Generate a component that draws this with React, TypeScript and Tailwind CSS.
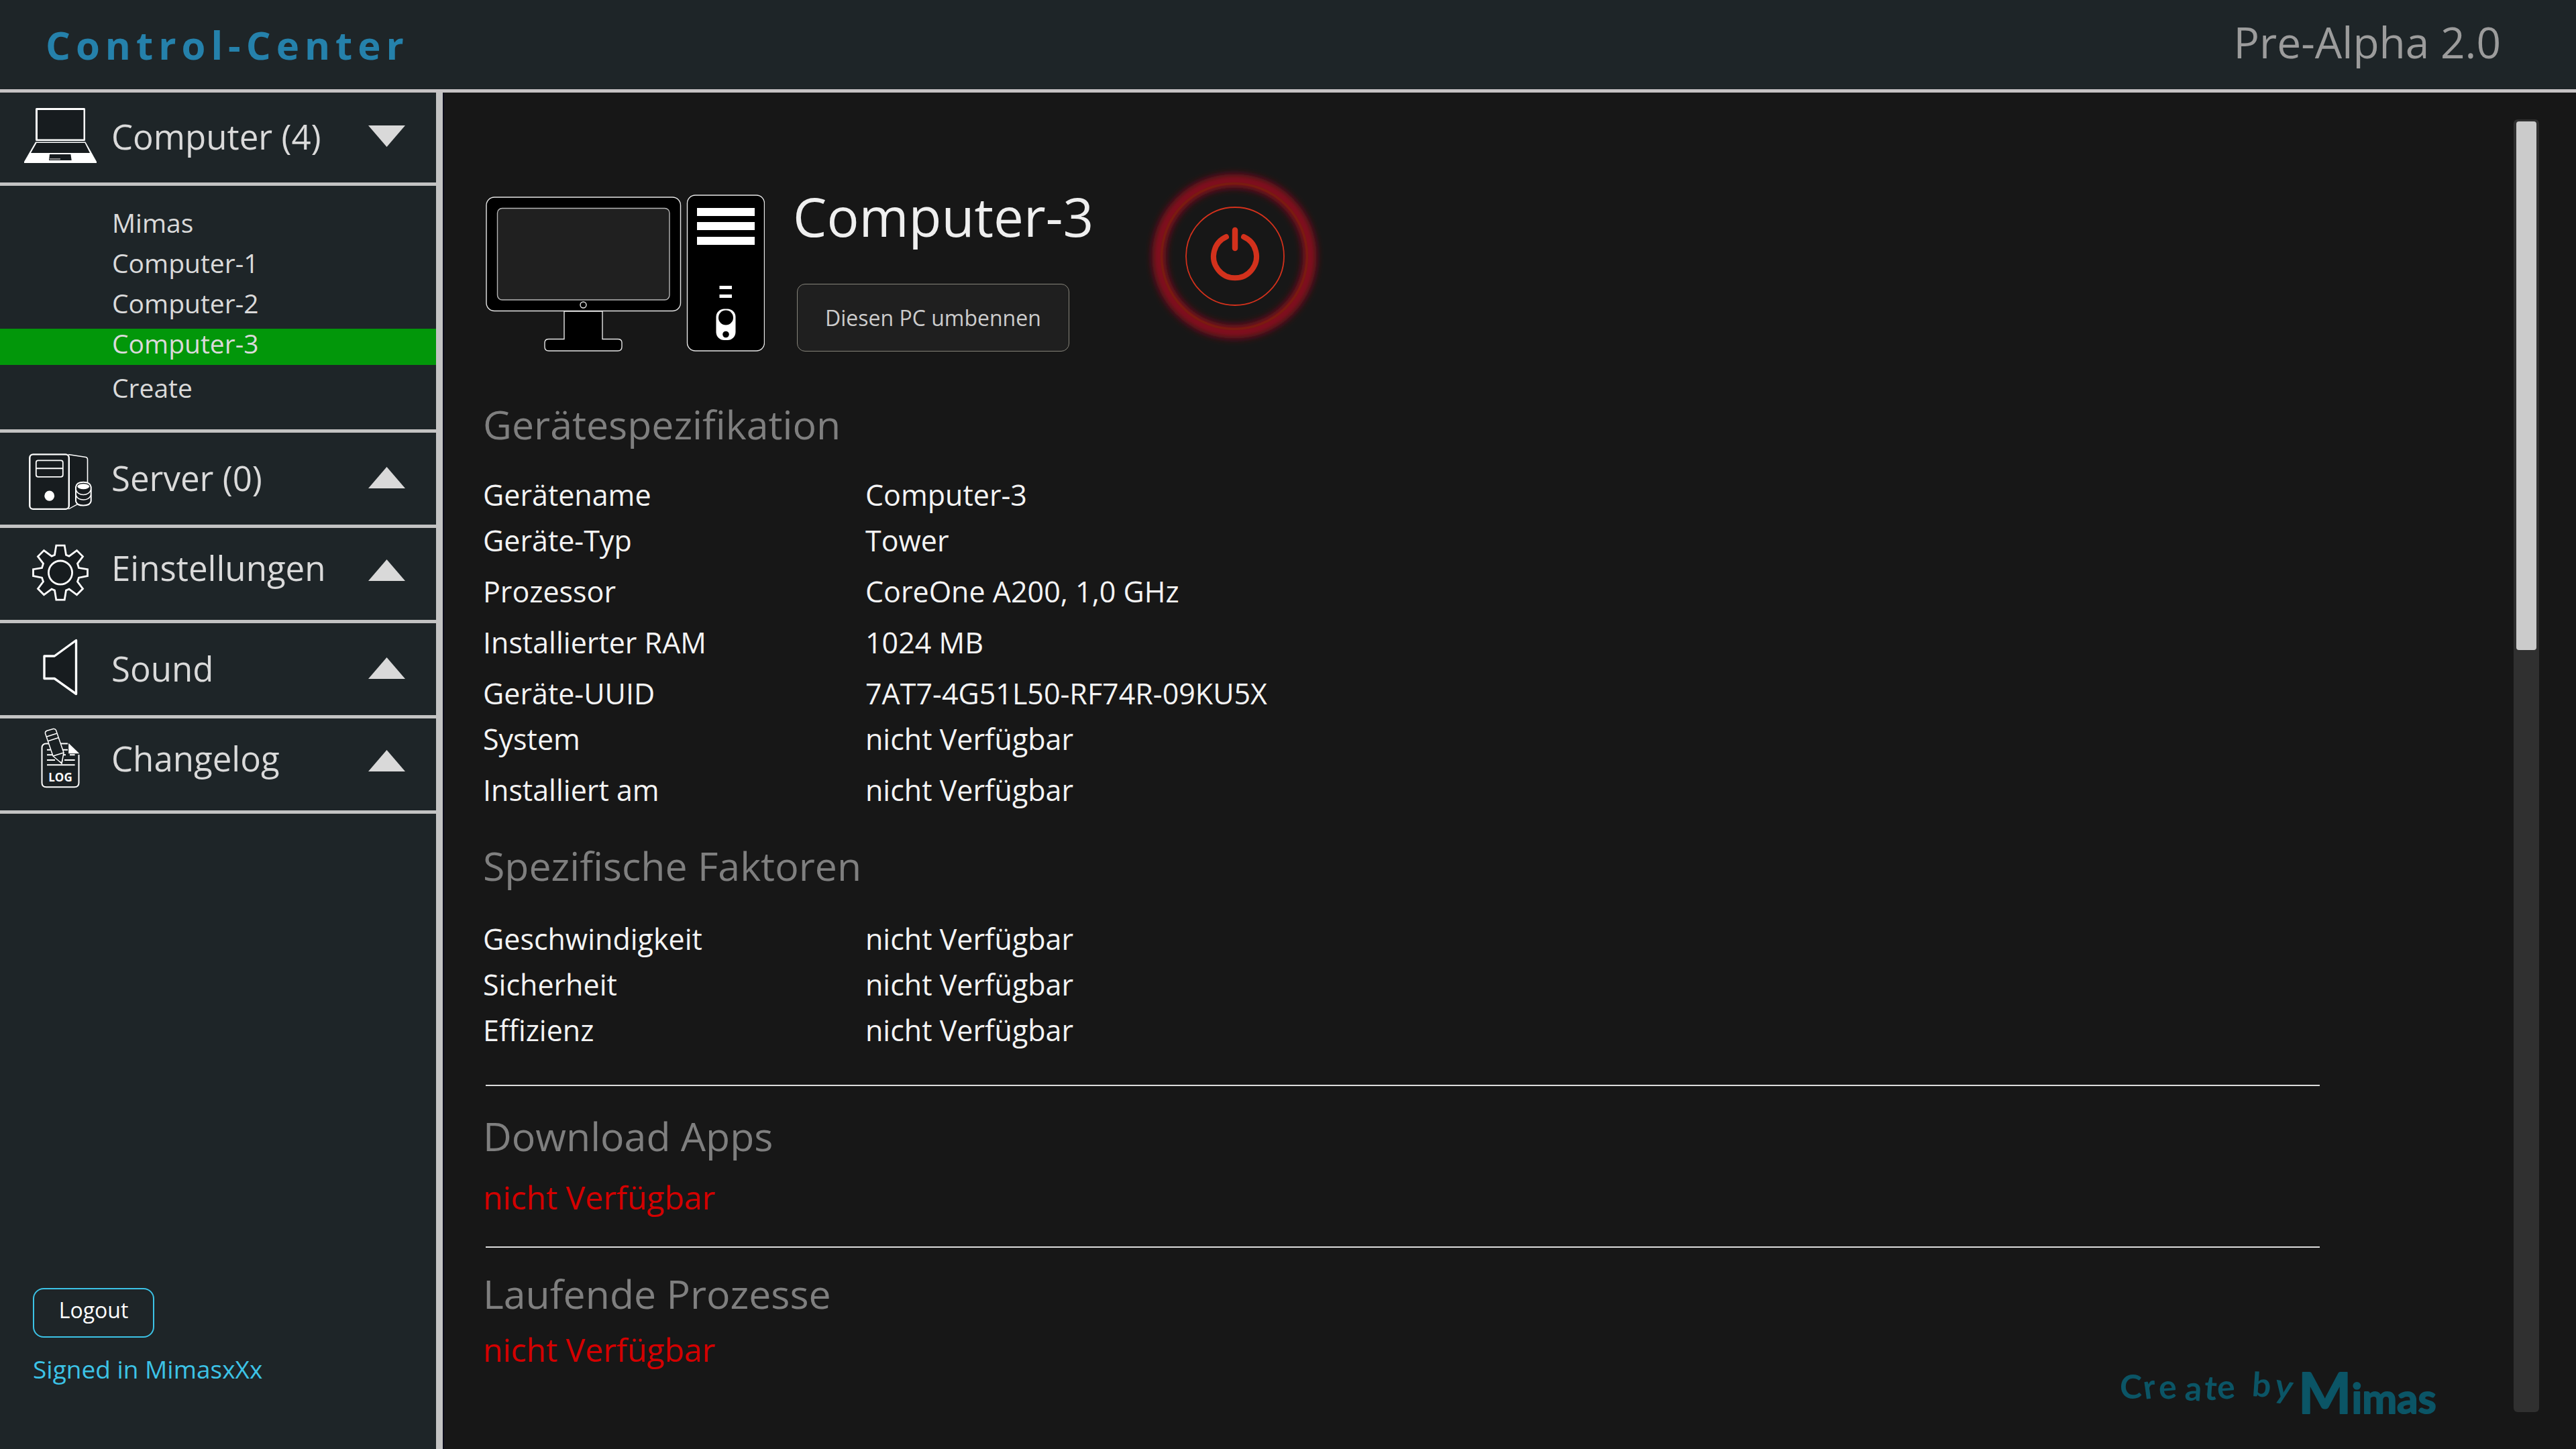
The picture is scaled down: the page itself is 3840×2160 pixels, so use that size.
import type { ReactNode } from "react";

const iconClass = "h-[134px] w-[114px] shrink-0";

function LaptopIcon() {
  return (
    <svg viewBox="0 0 114 134" className={iconClass} aria-hidden="true">
      <rect x="21" y="23" width="74" height="49" rx="1.5" fill="#fff" />
      <rect x="24" y="26" width="68.5" height="43.5" fill="#171c1f" />
      <path d="M21 73.5H95.5L112 103V105H4V103Z" fill="#fff" />
      <path d="M22.5 75H94.5L102 90H14Z" fill="#171c1f" />
      <path d="M42 92H73.4L74.7 101H41Z" fill="#171c1f" />
      <path d="M42 99H58" stroke="#8b8b8b" strokeWidth="2" />
    </svg>
  );
}

function ServerIcon() {
  return (
    <svg viewBox="0 0 114 134" className={iconClass} fill="#171c1f" stroke="#fff" strokeWidth="2" strokeLinejoin="round" aria-hidden="true">
      <path d="M70 30.5L96 34.5Q98.5 35 98.5 38V72L83 104.5L70 112Z" stroke="none" />
      <path d="M70 30.5L96 34.5Q98.5 35 98.5 38V72" fill="none" strokeWidth="1.6" />
      <path d="M70 112L83 104.8" strokeWidth="1.4" />
      <rect x="12.3" y="30.4" width="58.5" height="81.5" rx="5" strokeWidth="2.4" />
      <rect x="21.8" y="39.4" width="40" height="24.4" rx="3" strokeWidth="1.8" />
      <path d="M22 51.3H62" />
      <ellipse cx="41.7" cy="92.2" rx="7.4" ry="7.6" fill="#fff" stroke="none" />
      <path d="M81 79V100Q82 106.5 92.3 106.5Q102.5 106.5 103.7 100V79Q102.5 71.8 92.3 71.8Q82 71.8 81 79Z" />
      <path d="M81 83Q84 90.5 92.3 90.5Q100.5 90.5 103.7 83M81 91Q84 98 92.3 98Q100.5 98 103.7 91" fill="none" strokeWidth="1.6" />
      <ellipse cx="92.3" cy="78.2" rx="8.8" ry="4" fill="#fff" stroke="none" />
    </svg>
  );
}

function GearIcon() {
  return (
    <svg viewBox="0 0 114 134" className={iconClass} fill="#171c1f" stroke="#fff" strokeWidth="2.8" aria-hidden="true">
      <g transform="translate(58 64.6)">
        <path d="M-6.2 -40.5H6.2L8.5 -26.4L13 -24.5L24.5 -33L33.5 -24L25.5 -13.5L27.5 -7L40.5 -5V5L27.5 7.5L25.5 13.5L33.5 24L24.5 33L13 24.5L8.5 26.4L6.2 40.5H-6.2L-8.5 26.4L-13 24.5L-24.5 33L-33.5 24L-25.5 13.5L-27.5 7.5L-40.5 5V-5L-27.5 -7L-25.5 -13.5L-33.5 -24L-24.5 -33L-13 -24.5L-8.5 -26.4Z" />
        <circle r="17.6" />
      </g>
    </svg>
  );
}

function SpeakerIcon() {
  return (
    <svg viewBox="0 0 114 134" className={iconClass} aria-hidden="true">
      <path d="M34 47H49.2L81.5 23.5V103.5L49.2 80.5H34Z" fill="#171c1f" stroke="#fff" strokeWidth="3.4" strokeLinejoin="round" />
    </svg>
  );
}

function LogIcon() {
  return (
    <svg viewBox="0 0 114 134" className={iconClass} fill="none" stroke="#fff" strokeWidth="2" aria-hidden="true">
      <path d="M69 35.5H37Q30.5 35.5 30.5 42V94Q30.5 100.3 37 100.3H79Q85.5 100.3 85.5 94V52" fill="#1a2023" />
      <path d="M70.2 34.7L86.3 50.3H70.2Z" fill="#fff" stroke="none" />
      <path d="M38 44.7H43M58 44.7H69M38 52.3H46M62 52.3H66M72 52.3H79.6M38 60H50M64 60H79.6M38 67.3H79.6" />
      <path d="M35.4 20Q35.2 17.5 38 16.3L47.5 13.5Q50.5 13 51.5 15.5L63 49L60 65L47 54Z" fill="#1a2023" strokeWidth="1.5" strokeLinejoin="round" />
      <path d="M37.2 25.2L52.8 20.2M39.4 31.7L55 26.7M47 54L63 49M57.5 62.5L60 65L61 60" strokeWidth="1.5" />
      <text x="58" y="91.8" textAnchor="middle" fill="#fff" stroke="none" fontSize="17" fontWeight="700">
        LOG
      </text>
    </svg>
  );
}

function Triangle({ down = false }: { down?: boolean }) {
  return (
    <svg viewBox="0 0 55 32" className="h-8 w-[55px] shrink-0" fill="#d9d9d9" aria-hidden="true">
      {down ? <path d="M0 0H55L27.5 32Z" /> : <path d="M0 32H55L27.5 0Z" />}
    </svg>
  );
}

function MenuRow({ icon, label, open = false, raised = false }: { icon: ReactNode; label: string; open?: boolean; raised?: boolean }) {
  return (
    <button
      type="button"
      aria-expanded={open}
      className={`flex w-full cursor-pointer items-center border-b-[5px] border-[#c3c3c3] pr-[46px] pl-8 text-left ${open ? "h-[139px]" : "h-[142px]"}`}
    >
      {icon}
      <span className={`ml-5 flex-1 text-[51px] leading-[72px] ${raised ? "pb-5" : "pb-1"}`}>{label}</span>
      <span className={raised ? "pb-3" : "pb-1"}>
        <Triangle down={open} />
      </span>
    </button>
  );
}

const computers = ["Mimas", "Computer-1", "Computer-2", "Computer-3"];
const itemClass = "block h-[54px] w-full cursor-pointer pb-[10px] pl-[167px] text-left text-[39px] leading-[44px]";

function Sidebar() {
  return (
    <aside className="flex w-[660px] shrink-0 flex-col border-r-[10px] border-[#c3c3c3] bg-[#1e2528] text-[#dadada]">
      <nav>
        <MenuRow icon={<LaptopIcon />} label="Computer (4)" open />
        <div className="border-b-[5px] border-[#c3c3c3] pt-[33px] pb-[30px]">
          <ul className="flex flex-col gap-[6px]">
            {computers.map((name) => (
              <li key={name}>
                <button type="button" className={`${itemClass} ${name === "Computer-3" ? "bg-[#02970a]" : ""}`}>
                  {name}
                </button>
              </li>
            ))}
          </ul>
          <button type="button" className={`${itemClass} mt-3`}>
            Create
          </button>
        </div>
        <MenuRow icon={<ServerIcon />} label="Server (0)" />
        <MenuRow icon={<GearIcon />} label="Einstellungen" raised />
        <MenuRow icon={<SpeakerIcon />} label="Sound" />
        <MenuRow icon={<LogIcon />} label="Changelog" raised />
      </nav>
      <div className="mt-auto pb-[94px] pl-[49px]">
        <button type="button" className="h-[74px] w-[181px] cursor-pointer rounded-2xl border-2 border-[#3cc3e6] pb-2 text-[32px] leading-[44px] text-white">
          Logout
        </button>
        <p className="mt-[22px] text-[37px] leading-[50px] text-[#3cc3e6]">Signed in MimasxXx</p>
      </div>
    </aside>
  );
}

function WorkstationDrawing() {
  return (
    <svg viewBox="0 0 416 234" className="ml-1 h-[234px] w-[416px] shrink-0" fill="#000" stroke="#e6e6e6" strokeWidth="1.4" aria-hidden="true">
      <path d="M117 174V215.500H94Q88 215.500 88 221V227Q88 233 94 233H197Q203 233 203 227V221Q203 215.500 197 215.500H174V174Z" />
      <rect x="1" y="4" width="289.5" height="169.5" rx="12" />
      <rect x="17.5" y="20.5" width="256.5" height="136.5" rx="7" fill="#202020" stroke="#b5b5b5" />
      <circle cx="145.5" cy="164.5" r="4.5" />
      <rect x="300.5" y="1" width="115" height="232" rx="12" />
      <g fill="#fff" stroke="none">
        <rect x="315" y="20" width="86" height="12" />
        <rect x="315" y="41" width="86" height="12" />
        <rect x="315" y="63" width="86" height="12" />
        <rect x="348.5" y="136" width="18.5" height="5" />
        <rect x="348.5" y="149" width="18.5" height="5" />
        <rect x="343.5" y="170.5" width="29" height="46.500" rx="12" />
      </g>
      <circle cx="358" cy="183.5" r="11" stroke="none" />
      <circle cx="358" cy="208.5" r="4.8" stroke="none" />
    </svg>
  );
}

function PowerDrawing() {
  return (
    <svg viewBox="0 0 280 280" className="size-[280px]" fill="none" aria-hidden="true">
      <defs>
        <filter id="glow" x="-20%" y="-20%" width="140%" height="140%">
          <feGaussianBlur stdDeviation="5.5" />
        </filter>
      </defs>
      <circle cx="140" cy="138" r="112.5" stroke="#84111a" strokeWidth="20" filter="url(#glow)" />
      <circle cx="140" cy="138" r="108.5" stroke="#7a1b10" strokeWidth="3.5" />
      <circle cx="141" cy="138" r="73" stroke="#d2311c" strokeWidth="1.8" />
      <path d="M128 109A32 32 0 1 0 154 109" stroke="#d2311c" strokeWidth="8" strokeLinecap="round" />
      <path d="M141 99V126" stroke="#d2311c" strokeWidth="8.5" strokeLinecap="round" />
    </svg>
  );
}

type Spec = { label: string; value: string; tight?: boolean };

const deviceSpecs: Spec[] = [
  { label: "Gerätename", value: "Computer-3" },
  { label: "Geräte-Typ", value: "Tower", tight: true },
  { label: "Prozessor", value: "CoreOne A200, 1,0 GHz" },
  { label: "Installierter RAM", value: "1024 MB" },
  { label: "Geräte-UUID", value: "7AT7-4G51L50-RF74R-09KU5X" },
  { label: "System", value: "nicht Verfügbar", tight: true },
  { label: "Installiert am", value: "nicht Verfügbar" },
];

const factors: Spec[] = [
  { label: "Geschwindigkeit", value: "nicht Verfügbar" },
  { label: "Sicherheit", value: "nicht Verfügbar", tight: true },
  { label: "Effizienz", value: "nicht Verfügbar", tight: true },
];

const sectionTitle = "text-[59px] leading-[80px] text-[#7f7f7f]";
const missing = "text-[48px] leading-[64px] text-[#d40000]";

function SpecTable({ rows, name }: { rows: Spec[]; name: string }) {
  return (
    <table aria-label={name} className="text-left text-[43px] leading-[56px] text-[#f4f4f4]">
      <tbody>
        {rows.map(({ label, value, tight }) => (
          <tr key={label} className={tight ? "h-[68px]" : "h-[76px]"}>
            <th scope="row" className="w-[570px] p-0 align-bottom font-normal">
              {label}
            </th>
            <td className="p-0 align-bottom">{value}</td>
          </tr>
        ))}
      </tbody>
    </table>
  );
}

function Signature() {
  return (
    <svg
      viewBox="0 0 480 120"
      className="absolute right-[205px] bottom-[15px] h-[120px] w-[480px]"
      fill="#0b5566"
      stroke="#0b5566"
      strokeLinejoin="round"
      fontFamily="Lato, sans-serif"
      role="img"
      aria-label="Create by Mimas"
    >
      <text x="5 42 64 101 130 151 189 201 234" y="60 61 61 62 61 61 56 56 57" rotate="0 -8 -4 4 4 -4 0 4 10" fontSize="50" fontWeight="700" strokeWidth="0">
        Create by
      </text>
      <text x="271" y="82" fontWeight="700" strokeWidth="2">
        <tspan fontSize="84">M</tspan>
        <tspan fontSize="62">imas</tspan>
      </text>
    </svg>
  );
}

export default function App() {
  return (
    <div className="flex min-h-screen flex-col bg-[#171717] font-['Open_Sans',sans-serif]">
      <header className="flex h-[138px] items-center justify-between border-b-[5px] border-[#c6c3c4] bg-[#1e2528] pr-[112px] pl-[68px]">
        <h1 className="text-[58px] leading-[80px] font-bold tracking-[8px] text-[#2581ab]">Control-Center</h1>
        <p className="pb-2 text-[64px] leading-[88px] text-[#9c9c9c]">Pre-Alpha 2.0</p>
      </header>
      <div className="flex flex-1">
        <Sidebar />
        <main className="relative flex flex-1 border-l-2 border-[#0b0c1c] pt-10 pr-[55px] pb-[55px] pl-[58px]">
          <div className="flex-1 pt-[66px] pr-[289px]">
            <div className="flex items-end">
              <WorkstationDrawing />
              <div className="ml-[42px]">
                <h2 className="text-[80px] leading-[96px] text-[#efefef]">Computer-3</h2>
                <button type="button" className="mt-[53px] ml-1.5 h-[101px] cursor-pointer rounded-xl border border-[#86847a] bg-[#1f1f1f] px-[41px] text-[32px] leading-[44px] text-[#cccccc]">
                  Diesen PC umbennen
                </button>
              </div>
              <button type="button" aria-label="Power" className="ml-[70px] cursor-pointer rounded-full">
                <PowerDrawing />
              </button>
            </div>
            <section>
              <h3 className={`mt-[68px] mb-[18px] ${sectionTitle}`}>Gerätespezifikation</h3>
              <SpecTable rows={deviceSpecs} name="Gerätespezifikation" />
            </section>
            <section>
              <h3 className={`mt-11 mb-[22px] ${sectionTitle}`}>Spezifische Faktoren</h3>
              <SpecTable rows={factors} name="Spezifische Faktoren" />
            </section>
            <hr className="mt-[53px] ml-1 border-t-2 border-[#dddddd]" />
            <section>
              <h3 className={`mt-[34px] ${sectionTitle}`}>Download Apps</h3>
              <p className={`mt-5 ${missing}`}>nicht Verfügbar</p>
            </section>
            <hr className="mt-[41px] ml-1 border-t-2 border-[#dddddd]" />
            <section>
              <h3 className={`mt-7 ${sectionTitle}`}>Laufende Prozesse</h3>
              <p className={`mt-3 ${missing}`}>nicht Verfügbar</p>
            </section>
          </div>
          <div className="w-[38px] shrink-0 rounded-md bg-[#303030] px-1 py-[3px]">
            <div className="h-[41%] rounded-sm bg-[#cbcbcb]" />
          </div>
          <Signature />
        </main>
      </div>
    </div>
  );
}
